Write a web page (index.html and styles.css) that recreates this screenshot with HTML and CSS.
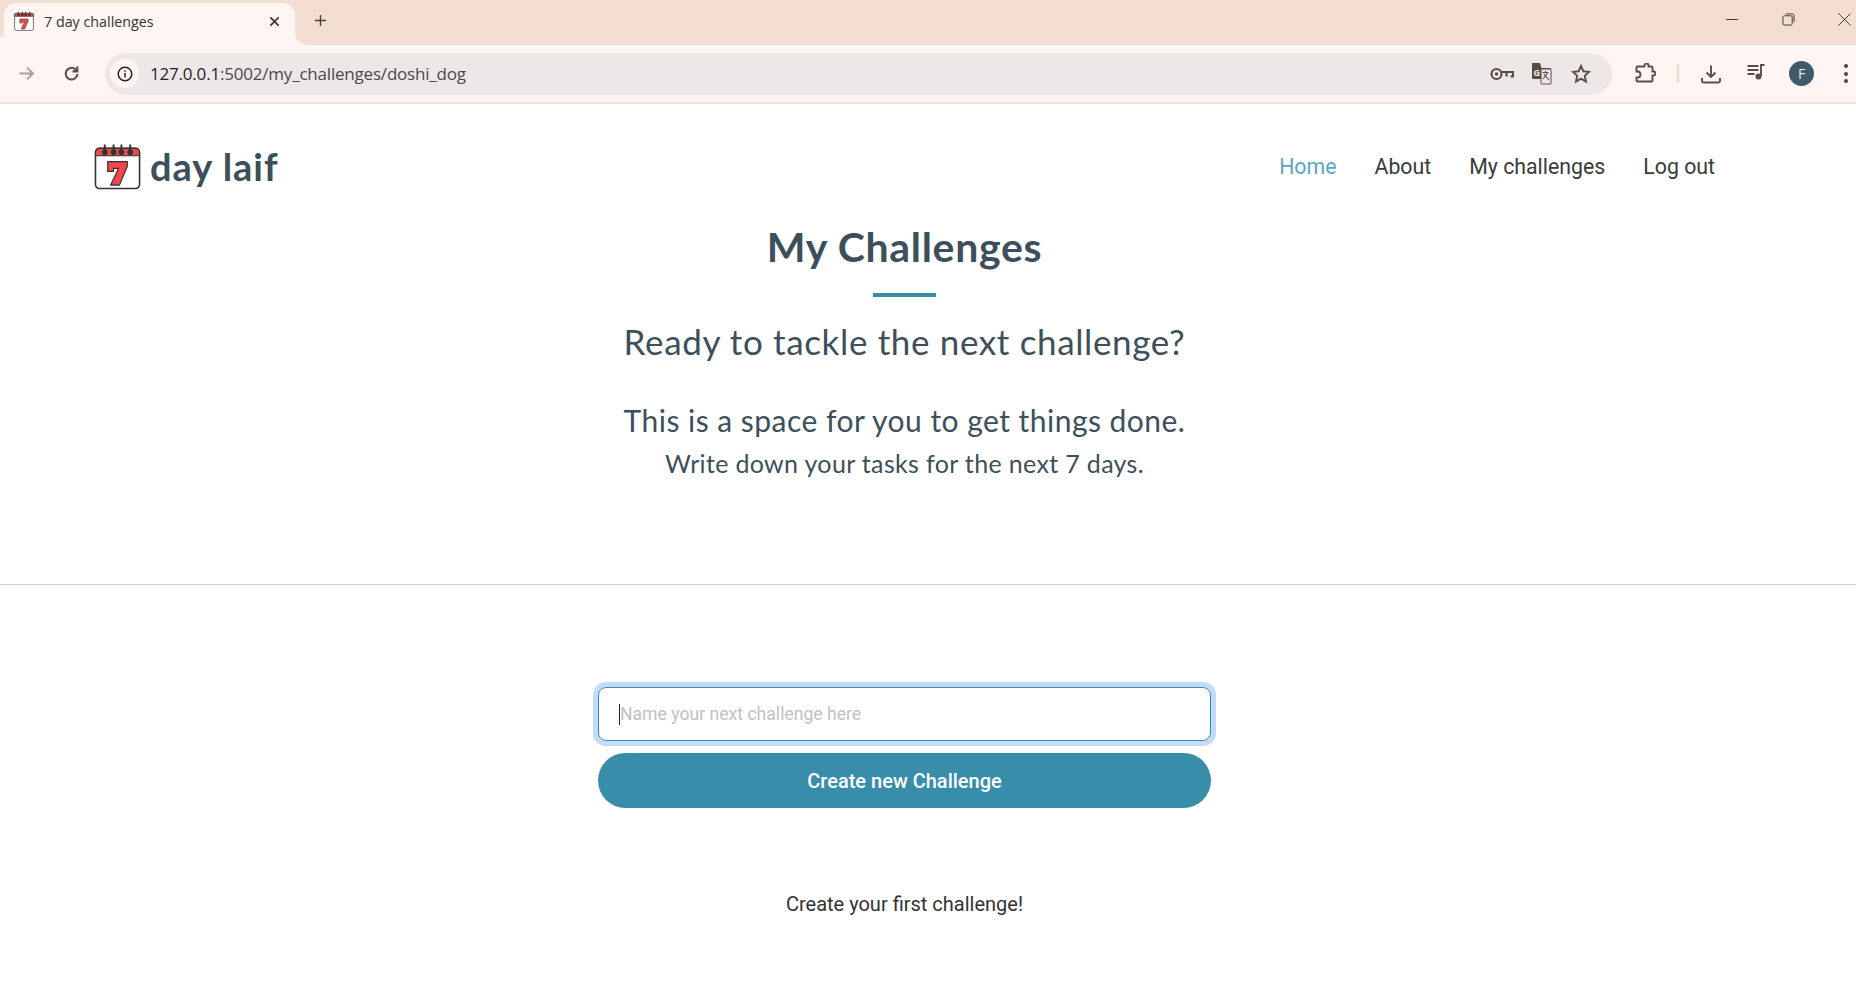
FILE: index.html
```html
<!DOCTYPE html>
<html lang="en">
<head>
<meta charset="utf-8">
<title>7 day challenges</title>
<link rel="stylesheet" href="styles.css">
</head>
<body>
<svg class="defs" width="0" height="0" aria-hidden="true">
  <symbol id="cal" viewBox="0 0 48 48">
    <rect x="1.500" y="5.500" width="45" height="41" rx="4" fill="#fff" stroke="#333" stroke-width="1.600"/>
    <path d="M1.500 13V9.500a4 4 0 0 1 4-4h37a4 4 0 0 1 4 4V13z" fill="#f0474b" stroke="#333" stroke-width="1.200"/>
    <g fill="#333">
      <path d="M10 1.500h2v5a3 3 0 1 1-2 0z"/>
      <path d="M19 1.500h2v5a3 3 0 1 1-2 0z"/>
      <path d="M27 1.500h2v5a3 3 0 1 1-2 0z"/>
      <path d="M36 1.500h2v5a3 3 0 1 1-2 0z"/>
    </g>
    <path d="M14 19h20v5L26 43h-9l8-17h-5v3h-6z" fill="#f0474b" stroke="#333" stroke-width="1.200" stroke-linejoin="round"/>
  </symbol>
</svg>

<header class="chrome">
  <div class="tabstrip">
    <div class="tab">
      <svg class="favicon"><use href="#cal"/></svg>
      <span class="tab-title">7 day challenges</span>
      <svg class="tab-close" viewBox="0 0 12 12"><path d="M1.500 1.500l9 9M10.500 1.500l-9 9"/></svg>
    </div>
    <svg class="new-tab" viewBox="0 0 14 14"><path d="M7 1v12M1 7h12"/></svg>
    <div class="window-controls">
      <svg class="win" viewBox="0 0 14 14"><path d="M0 7h13"/></svg>
      <svg class="win" viewBox="0 0 14 14"><rect x="1" y="3" width="10" height="10" rx="1.500"/><path d="M4 1h7a2 2 0 0 1 2 2v7"/></svg>
      <svg class="win" viewBox="0 0 14 14"><path d="M0.500 0.500l13 13M13.500 0.500l-13 13"/></svg>
    </div>
  </div>
  <div class="toolbar">
    <svg class="tool forward" viewBox="0 0 16 16"><path d="M1.500 8h12.500M8.500 2.500L14 8l-5.500 5.500"/></svg>
    <svg class="tool reload" viewBox="0 0 16 16"><path d="M13.500 8.500a5.500 5.500 0 1 1-1.700-4.300L13.500 6M13.500 1.500V6H9"/></svg>
    <div class="omnibox">
      <span class="info-badge"><svg class="info" viewBox="0 0 16 16"><circle cx="8" cy="8" r="6.800"/><path d="M8 7v4.500M8 4.200v1.600"/></svg></span>
      <span class="url"><span class="url-host">127.0.0.1</span>:5002/my_challenges/doshi_dog</span>
      <div class="omni-icons">
        <svg class="tool key" viewBox="0 0 24 14"><circle cx="6.500" cy="7" r="5"/><circle class="solid" cx="6.500" cy="7" r="1.800"/><path d="M11.500 5H23v4.500h-2.500M16.500 9.500V6"/></svg>
        <svg class="tool translate" viewBox="0 0 22 22"><path class="solid" d="M2 0h8l1.500 5H20a1 1 0 0 1 1 1v14a1 1 0 0 1-1 1h-8l-1-5H3a1 1 0 0 1-1-1z"/><rect class="paper" x="11" y="6" width="10" height="15" rx=".5"/><path class="tr-x" d="M12.500 9.500h6M15.500 8v1.500M13 16l4.500-6M14 11l5 6"/><text class="tr-g" x="3.500" y="12.500">G</text></svg>
        <svg class="tool star" viewBox="0 0 20 20"><path d="M10 2l2.400 5.300 5.600.6-4.200 3.900 1.200 5.700-5-2.900-5 2.900 1.200-5.700L2 7.900l5.600-.6z"/></svg>
      </div>
    </div>
    <svg class="tool puzzle" viewBox="0 0 22 22"><path d="M8 4h3V3a2 2 0 0 1 4 0v1h3a1 1 0 0 1 1 1v4h1a2 2 0 0 1 0 4h-1v5a1 1 0 0 1-1 1H4a1 1 0 0 1-1-1v-3h1a3 3 0 0 0 0-6H3V5a1 1 0 0 1 1-1z" transform="translate(-.5 -.5)"/></svg>
    <span class="divider"></span>
    <svg class="tool download" viewBox="0 0 20 20"><path d="M10 1.500v11M5.500 8.500l4.500 4.500 4.500-4.500M1 14v3a1.500 1.500 0 0 0 1.500 1.500h15A1.500 1.500 0 0 0 19 17v-3"/></svg>
    <svg class="tool media" viewBox="0 0 20 18"><path d="M1 3h11M1 7h11M1 11h7M18 2h-3.500v11"/><circle class="solid" cx="12" cy="13.500" r="3"/></svg>
    <span class="avatar">F</span>
    <span class="kebab"><i></i><i></i><i></i></span>
  </div>
</header>

<div class="page">
  <nav class="site-nav">
    <a class="brand" href="#"><svg class="brand-icon"><use href="#cal"/></svg><span>day laif</span></a>
    <ul class="nav-links">
      <li class="active">Home</li>
      <li>About</li>
      <li>My challenges</li>
      <li>Log out</li>
    </ul>
  </nav>

  <section class="hero">
    <h1>My Challenges</h1>
    <div class="rule"></div>
    <h2>Ready to tackle the next challenge?</h2>
    <p class="lead">This is a space for you to get things done.</p>
    <p class="sub">Write down your tasks for the next 7 days.</p>
  </section>

  <hr class="sep">

  <div class="lower">
    <form class="create">
      <div class="fake-input"><span class="caret"></span><span class="placeholder">Name your next challenge here</span></div>
      <button type="button" class="btn">Create new Challenge</button>
    </form>
    <p class="empty">Create your first challenge!</p>
  </div>
</div>
</body>
</html>
```
FILE: styles.css
```css
* { box-sizing: border-box; }
html, body { margin: 0; height: 100%; overflow: hidden; background: #fff; }
body { font-family: Roboto, sans-serif; color: #333; }
.defs { position: absolute; }

.chrome { font-family: "Open Sans", sans-serif; }
.tabstrip { height: 45px; background: #f4ddd1; display: flex; align-items: flex-end; padding-left: 4px; }
.tab { position: relative; width: 291px; height: 42px; background: #fff6f3; border-radius: 12px 12px 0 0; display: flex; align-items: center; padding: 0 15px 6px 10px; }
.tab::before, .tab::after { content: ""; position: absolute; bottom: 0; height: 12px; }
.tab::before { left: -4px; width: 4px; background: radial-gradient(circle at 0 0, #f4ddd1 4px, #fff6f3 4.500px); }
.tab::after { right: -12px; width: 12px; background: radial-gradient(circle at 100% 0, #f4ddd1 11.500px, #fff6f3 12px); }
.favicon { width: 20px; height: 20px; flex: none; }
.tab-title { margin-left: 10px; font-size: 14.300px; color: #333; flex: 1; }
.tab-close { width: 11px; height: 11px; fill: none; stroke: #333; stroke-width: 1.800; }
.new-tab { width: 13px; height: 13px; margin: 0 0 5px 19px; align-self: center; fill: none; stroke: #444; stroke-width: 1.500; }
.window-controls { margin-left: auto; align-self: stretch; display: flex; align-items: center; gap: 43px; padding: 0 5px 6px 0; }
.win { width: 13px; height: 13px; fill: none; stroke: #333; stroke-width: 1; }

.toolbar { height: 59px; background: #fff6f3; border-bottom: 2px solid #e9e2df; display: flex; align-items: center; padding-left: 18px; }
.tool { flex: none; fill: none; stroke: #5a4d47; stroke-width: 1.900; }
.tool .solid { fill: #5a4d47; stroke: none; }
.forward { width: 17px; height: 17px; stroke: #a8a09c; }
.reload { width: 17px; height: 17px; margin-left: 28px; }
.omnibox { width: 1507px; height: 42px; margin-left: 25px; background: #ede7e8; border-radius: 21px; display: flex; align-items: center; padding-left: 5px; }
.info-badge { width: 29px; height: 29px; border-radius: 50%; background: #fff6f3; display: flex; align-items: center; justify-content: center; }
.info { width: 16px; height: 16px; fill: none; stroke: #222; stroke-width: 1.500; }
.url { margin-left: 11px; font-size: 17px; color: #4a4a4a; letter-spacing: -.2px; }
.url-host { color: #1f1f1f; }
.omni-icons { margin-left: auto; display: flex; align-items: center; padding-right: 21px; }
.key { width: 24px; height: 14px; stroke-width: 2.200; }
.translate { width: 22px; height: 22px; margin-left: 16px; stroke-width: 1; }
.translate .paper { fill: #ede7e8; }
.translate .tr-x { stroke-width: 1.100; }
.translate .tr-g { fill: #ede7e8; stroke: none; font: 700 9px "Open Sans", sans-serif; }
.star { width: 20px; height: 20px; margin-left: 19px; }
.puzzle { width: 22px; height: 22px; margin-left: 22px; }
.divider { width: 2px; height: 19px; margin-left: 21px; background: #f8d9c8; }
.download { width: 20px; height: 20px; margin-left: 22px; }
.media { width: 21px; height: 18px; margin-left: 25px; margin-bottom: 4px; }
.avatar { width: 25px; height: 25px; margin-left: 22px; border-radius: 50%; background: #3f5b69; color: #e8eef1; font-size: 14px; display: flex; align-items: center; justify-content: center; }
.kebab { margin-left: 30px; display: flex; flex-direction: column; gap: 3.500px; }
.kebab i { width: 4px; height: 4px; border-radius: 50%; background: #4d4440; display: block; }

.site-nav { display: flex; align-items: center; justify-content: space-between; padding: 38px 141px 0 94px; }
.brand { display: flex; align-items: center; gap: 9px; text-decoration: none; color: #3d4f5a; font-family: Lato, sans-serif; font-weight: 700; font-size: 38px; letter-spacing: 1px; line-height: 48px; }
.brand-icon { width: 47px; height: 47px; }
.nav-links { display: flex; gap: 38px; list-style: none; margin: 1px 0 0; padding: 0; font-size: 21.300px; color: #3a3a3a; }
.nav-links .active { color: #5ba6c2; }

.hero { text-align: center; color: #3d4f5a; font-family: Lato, sans-serif; padding-right: 47px; }
.hero h1 { margin: 31px 0 0; font-size: 41px; font-weight: 700; letter-spacing: .7px; line-height: 52px; }
.rule { width: 63px; height: 4px; margin: 20px auto 0; background: #388eaa; }
.hero h2 { margin: 20px 0 0; font-size: 35px; font-weight: 400; letter-spacing: .64px; line-height: 48px; }
.lead { margin: 35px 0 0; font-size: 30px; letter-spacing: .47px; line-height: 40px; }
.sub { margin: 5px 0 0; font-size: 25px; letter-spacing: .34px; line-height: 36px; }

.sep { margin: 103px 0 0; border: 0; border-top: 1px solid #ccc; }

.lower { padding-right: 47px; }
.create { width: 613px; margin: 102px auto 0; display: flex; flex-direction: column; gap: 12px; }
.fake-input { height: 54px; border: 1px solid #388eaa; border-radius: 8px; box-shadow: 0 0 0 5px #c5dbfb; display: flex; align-items: center; padding-left: 20px; font-size: 17.600px; }
.caret { width: 1px; height: 21px; background: #222; }
.placeholder { color: #c4c0c0; }
.btn { height: 55px; border: 0; border-radius: 28px; background: #388eaa; color: #fff; font: 500 20px Roboto, sans-serif; }
.empty { margin: 82px 0 0; text-align: center; font-size: 20px; line-height: 28px; color: #333; }
```
